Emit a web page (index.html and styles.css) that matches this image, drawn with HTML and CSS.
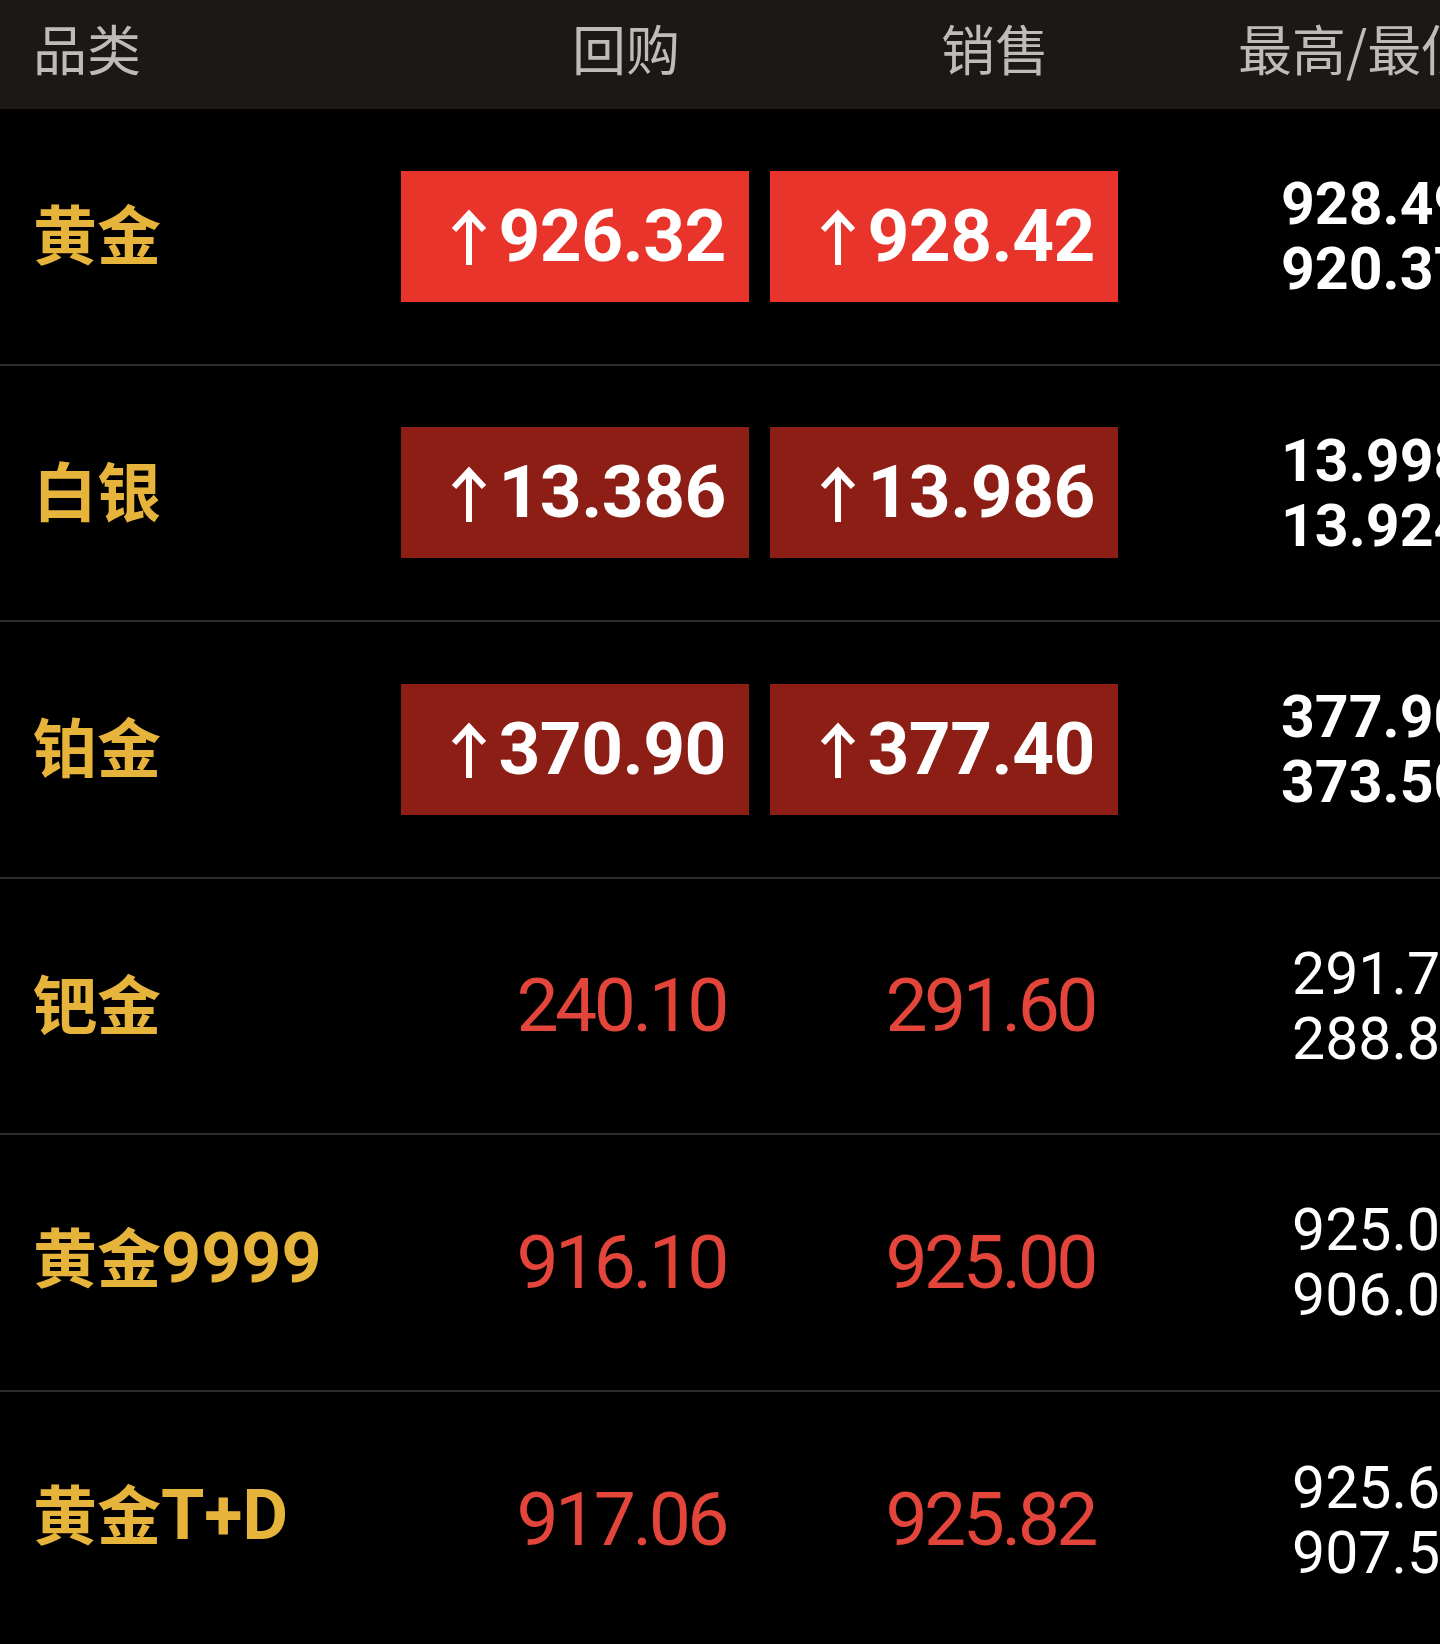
FILE: index.html
```html
<!DOCTYPE html>
<html lang="zh-CN">
<head>
<meta charset="utf-8">
<title>行情</title>
<link rel="stylesheet" href="styles.css">
</head>
<body>
<div class="board">
  <div class="head">
    <div class="hcell">品类</div>
    <div class="hcell hmid">回购</div>
    <div class="hcell hmid">销售</div>
    <div class="hcell hlast">最高/最低</div>
  </div>

  <div class="row">
    <div class="name">黄金</div>
    <div class="price box box-hot"><svg class="arrow" viewBox="0 0 42 58"><path d="M21 56V5M6 21L21 5L36 21"/></svg>926.32</div>
    <div class="price box box-hot"><svg class="arrow" viewBox="0 0 42 58"><path d="M21 56V5M6 21L21 5L36 21"/></svg>928.42</div>
    <div class="hilo hilo-bold"><span>928.49</span><span>920.37</span></div>
  </div>

  <div class="row">
    <div class="name">白银</div>
    <div class="price box box-dark"><svg class="arrow" viewBox="0 0 42 58"><path d="M21 56V5M6 21L21 5L36 21"/></svg>13.386</div>
    <div class="price box box-dark"><svg class="arrow" viewBox="0 0 42 58"><path d="M21 56V5M6 21L21 5L36 21"/></svg>13.986</div>
    <div class="hilo hilo-bold"><span>13.998</span><span>13.924</span></div>
  </div>

  <div class="row">
    <div class="name">铂金</div>
    <div class="price box box-dark"><svg class="arrow" viewBox="0 0 42 58"><path d="M21 56V5M6 21L21 5L36 21"/></svg>370.90</div>
    <div class="price box box-dark"><svg class="arrow" viewBox="0 0 42 58"><path d="M21 56V5M6 21L21 5L36 21"/></svg>377.40</div>
    <div class="hilo hilo-bold"><span>377.90</span><span>373.50</span></div>
  </div>

  <div class="row">
    <div class="name">钯金</div>
    <div class="price plain">240.10</div>
    <div class="price plain">291.60</div>
    <div class="hilo hilo-reg"><span>291.70</span><span>288.80</span></div>
  </div>

  <div class="row">
    <div class="name">黄金<span class="latin">9999</span></div>
    <div class="price plain">916.10</div>
    <div class="price plain">925.00</div>
    <div class="hilo hilo-reg"><span>925.00</span><span>906.00</span></div>
  </div>

  <div class="row row-last">
    <div class="name">黄金<span class="latin">T+D</span></div>
    <div class="price plain">917.06</div>
    <div class="price plain">925.82</div>
    <div class="hilo hilo-reg"><span>925.64</span><span>907.50</span></div>
  </div>
</div>
</body>
</html>
```

FILE: styles.css
```css
html, body {
  margin: 0;
  padding: 0;
  background: #000;
}

body {
  width: 1440px;
  height: 1644px;
  overflow: hidden;
  font-family: "Noto Sans CJK SC", sans-serif;
}

.board {
  display: flex;
  flex-direction: column;
  width: 1440px;
}

.head {
  display: grid;
  grid-template-columns: 345px 348px 348px 1fr;
  column-gap: 21px;
  align-items: center;
  height: 109px;
  padding-left: 33px;
  background: #1b1815;
  color: #bdbcba;
  font-size: 54px;
  font-weight: 400;
  white-space: nowrap;
}

.hcell {
  line-height: 1;
  margin-top: -14px;
}

.hmid {
  padding-left: 173px;
}

.hlast {
  padding-left: 101px;
}

.row {
  display: grid;
  grid-template-columns: 345px 348px 348px 1fr;
  column-gap: 21px;
  align-items: center;
  height: 256.5px;
  box-sizing: border-box;
  padding-left: 35px;
  border-bottom: 2px solid #2c2c2c;
  white-space: nowrap;
}

.row-last {
  border-bottom: none;
}

.name {
  color: #e6b43a;
  font-size: 64px;
  font-weight: 700;
  line-height: 1;
  margin-left: -2px;
  margin-top: -10px;
}

.latin {
  font-family: "Roboto", sans-serif;
  font-size: 70px;
  font-weight: 700;
}

.price {
  display: flex;
  align-items: center;
  justify-content: flex-end;
  height: 131px;
  box-sizing: border-box;
  padding-right: 23px;
  font-family: "Roboto", sans-serif;
  font-size: 73px;
  line-height: 1;
}

.box {
  color: #fff;
  font-weight: 700;
  letter-spacing: -0.5px;
}

.box-hot {
  background: #e8342a;
}

.box-dark {
  background: #8c1e15;
}

.arrow {
  width: 42px;
  height: 58px;
  margin-right: 8px;
  margin-top: 4px;
  fill: none;
  stroke: #fff;
  stroke-width: 6;
  stroke-linecap: butt;
  stroke-linejoin: miter;
}

.plain {
  color: #e4453a;
  font-weight: 400;
  font-size: 75px;
  letter-spacing: -3.5px;
}

.hilo {
  display: flex;
  flex-direction: column;
  font-family: "Roboto", sans-serif;
  font-size: 59px;
  line-height: 65px;
  color: #fff;
}

.hilo-bold {
  font-weight: 700;
  padding-left: 142px;
}

.hilo-reg {
  font-weight: 400;
  padding-left: 153px;
}
```
